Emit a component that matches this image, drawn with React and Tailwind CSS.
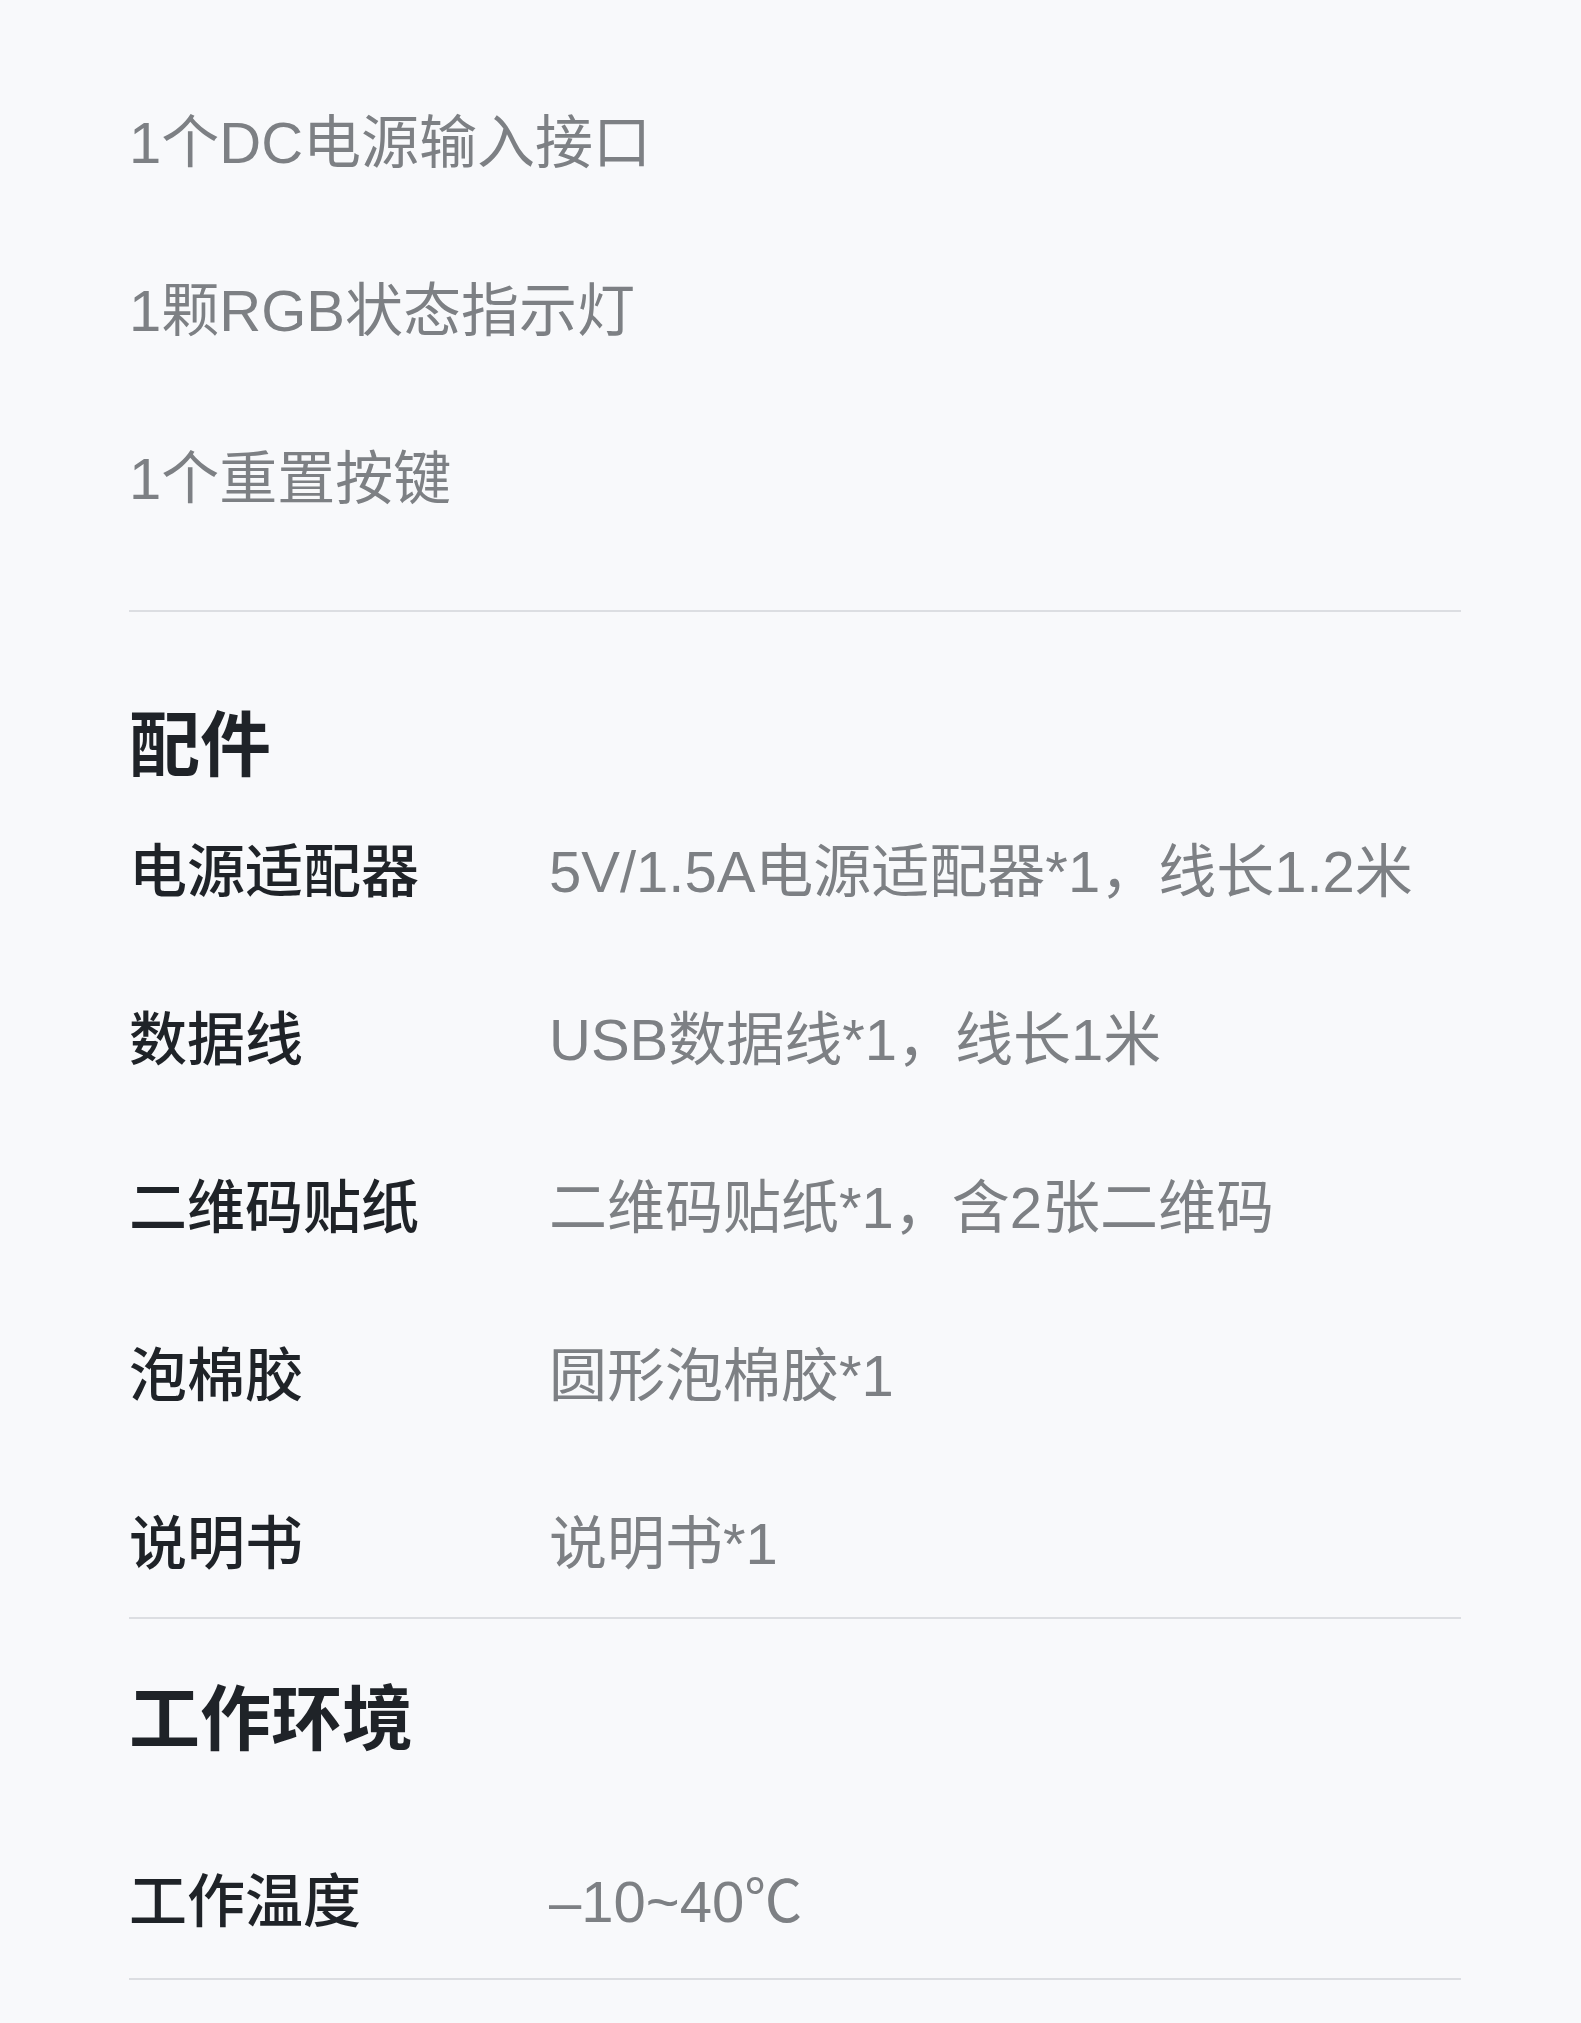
const ports = ['1个DC电源输入接口', '1颗RGB状态指示灯', '1个重置按键']

const accessories = [
  { label: '电源适配器', value: '5V/1.5A电源适配器*1，线长1.2米' },
  { label: '数据线', value: 'USB数据线*1，线长1米' },
  { label: '二维码贴纸', value: '二维码贴纸*1，含2张二维码' },
  { label: '泡棉胶', value: '圆形泡棉胶*1' },
  { label: '说明书', value: '说明书*1' },
]

function SpecRow({ label, value }) {
  return (
    <div className="grid h-[84px] grid-cols-[420px_1fr] items-center">
      <span className="font-medium text-[#1f2328]">{label}</span>
      <span className="text-[#7d8084]">{value}</span>
    </div>
  )
}

function Divider({ className }) {
  return <div className={`h-[2px] bg-[#dcdee2] ${className}`} />
}

function App() {
  return (
    <div
      className="min-h-[2023px] bg-[#f8f9fb] pl-[129px] pr-[120px] pt-[101px] text-[58px] leading-none"
      style={{ fontFamily: '"Liberation Sans", "Noto Sans CJK SC", sans-serif' }}
    >
      <div className="flex flex-col gap-[84px]">
        {ports.map((port) => (
          <div key={port} className="flex h-[84px] items-center text-[#7d8084]">
            {port}
          </div>
        ))}
      </div>

      <Divider className="mt-[89px]" />

      <h2 className="mt-[91px] flex h-[84px] items-center text-[71px] font-semibold text-[#1f2328]">配件</h2>
      <div className="mt-[43px] flex flex-col gap-[84px]">
        {accessories.map((item) => (
          <SpecRow key={item.label} label={item.label} value={item.value} />
        ))}
      </div>

      <Divider className="mt-[31px]" />

      <h2 className="mt-[58px] flex h-[84px] items-center text-[71px] font-semibold text-[#1f2328]">工作环境</h2>
      <div className="mt-[99px]">
        <SpecRow label="工作温度" value="–10~40℃" />
      </div>

      <Divider className="mt-[34px]" />
    </div>
  )
}

export default App
